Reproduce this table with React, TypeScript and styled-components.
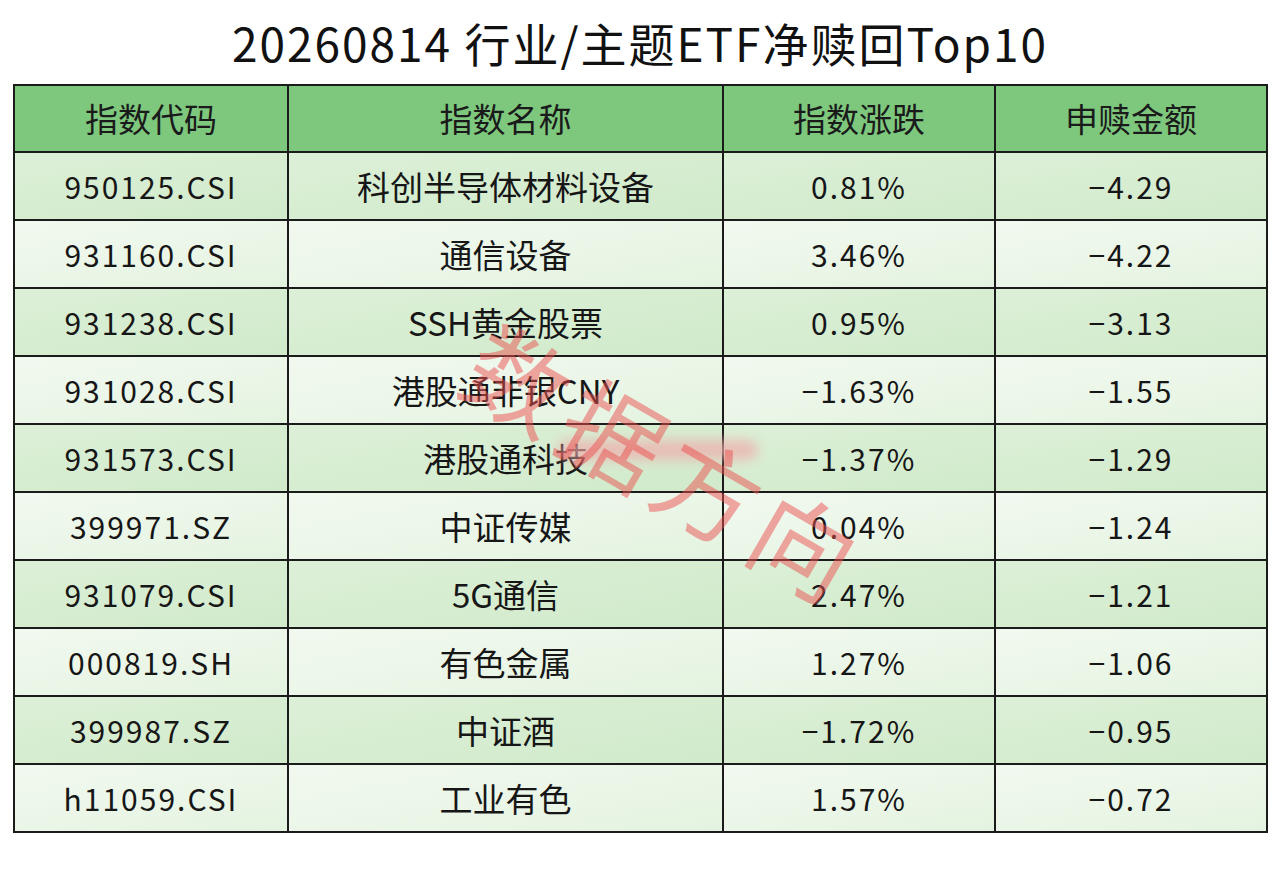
import * as React from 'react';
import styled, { createGlobalStyle } from 'styled-components';

type Row = { code: string; name: string; change: string; amount: string };

const rows: Row[] = [
  { code: '950125.CSI', name: '科创半导体材料设备', change: '0.81%', amount: '-4.29' },
  { code: '931160.CSI', name: '通信设备', change: '3.46%', amount: '-4.22' },
  { code: '931238.CSI', name: 'SSH黄金股票', change: '0.95%', amount: '-3.13' },
  { code: '931028.CSI', name: '港股通非银CNY', change: '-1.63%', amount: '-1.55' },
  { code: '931573.CSI', name: '港股通科技', change: '-1.37%', amount: '-1.29' },
  { code: '399971.SZ', name: '中证传媒', change: '0.04%', amount: '-1.24' },
  { code: '931079.CSI', name: '5G通信', change: '2.47%', amount: '-1.21' },
  { code: '000819.SH', name: '有色金属', change: '1.27%', amount: '-1.06' },
  { code: '399987.SZ', name: '中证酒', change: '-1.72%', amount: '-0.95' },
  { code: 'h11059.CSI', name: '工业有色', change: '1.57%', amount: '-0.72' },
];

const fmt = (s: string) => s.replace('-', '−');

export default function App() {
  return (
    <Page>
      <GlobalStyle />
      <Title>20260814 行业/主题ETF净赎回Top10</Title>
      <TableWrap>
        <Table>
          <HeaderRow>
            <HeadCell>指数代码</HeadCell>
            <HeadCell>指数名称</HeadCell>
            <HeadCell>指数涨跌</HeadCell>
            <HeadCell>申赎金额</HeadCell>
          </HeaderRow>
          {rows.map((r, i) => (
            <BodyRow key={r.code} $dark={i % 2 === 0}>
              <NumCell>{r.code}</NumCell>
              <NameCell>{r.name}</NameCell>
              <NumCell>{fmt(r.change)}</NumCell>
              <NumCell>{fmt(r.amount)}</NumCell>
            </BodyRow>
          ))}
        </Table>
        <Smudge />
        <Watermark>数据方向</Watermark>
      </TableWrap>
    </Page>
  );
}

const GlobalStyle = createGlobalStyle`
  html, body {
    margin: 0;
    padding: 0;
    background: #ffffff;
  }
  body {
    font-family: "Noto Sans CJK SC", "Noto Sans", sans-serif;
    color: #161616;
  }
`;

const Page = styled.div`
  width: 1280px;
  height: 895px;
  background: #fff;
  overflow: hidden;
`;

const Title = styled.h1`
  margin: 0;
  height: 84px;
  display: flex;
  align-items: center;
  justify-content: center;
  font-size: 46px;
  font-weight: 400;
  letter-spacing: 2px;
  color: #111;
`;

const TableWrap = styled.div`
  position: relative;
  margin: 0 12px 0 13px;
`;

const Table = styled.div`
  display: grid;
  grid-template-columns: 274px 435px 272px 1fr;
  border: 2px solid #1b1b1b;
  border-bottom: none;
  border-right: none;
`;

const HeaderRow = styled.div`
  display: contents;
`;

const BaseCell = styled.div`
  height: 66px;
  display: flex;
  align-items: center;
  justify-content: center;
  border-right: 2px solid #1b1b1b;
  border-bottom: 2px solid #1b1b1b;
  font-size: 30px;
  line-height: 1;
  white-space: nowrap;
`;

const HeadCell = styled(BaseCell)`
  height: 65px;
  background: #7ec87e;
  color: #1a1a1a;
  font-size: 33px;
`;

const BodyRow = styled.div<{ $dark: boolean }>`
  display: contents;
  & > div {
    background: ${p =>
      p.$dark
        ? 'linear-gradient(170deg, #dcf0d7 0%, #d1eacb 100%)'
        : 'linear-gradient(170deg, #f2f9f0 0%, #e4f3e0 100%)'};
  }
`;

const NameCell = styled(BaseCell)`
  font-size: 33px;
`;

const NumCell = styled(BaseCell)`
  letter-spacing: 2px;
`;

const Watermark = styled.div`
  position: absolute;
  left: 500px;
  top: 203px;
  font-size: 102px;
  font-weight: 400;
  letter-spacing: 8px;
  color: rgba(236, 80, 80, 0.5);
  transform: rotate(30deg);
  transform-origin: left top;
  pointer-events: none;
  white-space: nowrap;
`;

const Smudge = styled.div`
  position: absolute;
  left: 545px;
  top: 356px;
  width: 200px;
  height: 20px;
  border-radius: 10px;
  background: rgba(240, 170, 170, 0.7);
  filter: blur(6px);
  pointer-events: none;
`;
